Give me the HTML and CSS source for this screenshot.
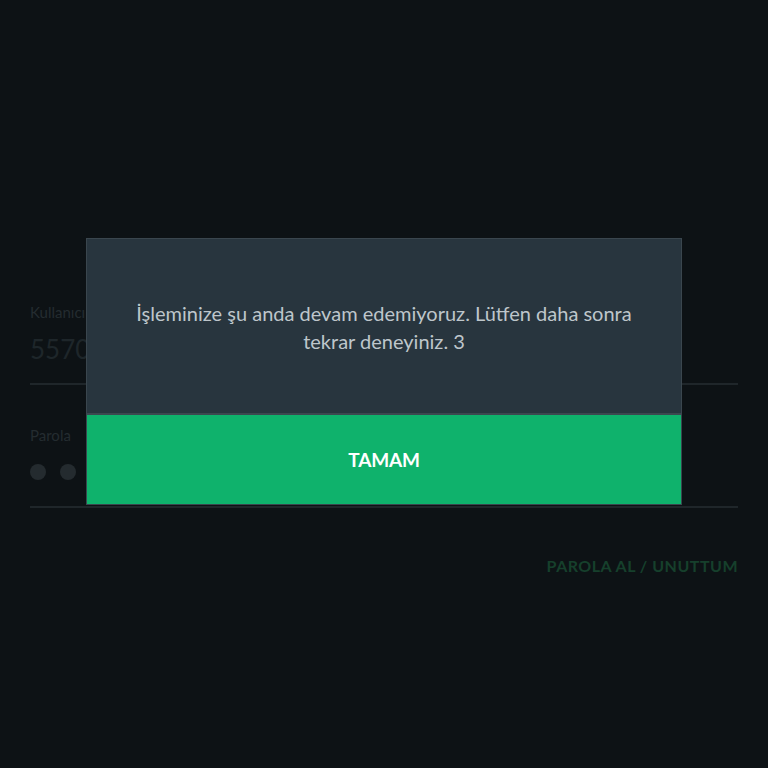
FILE: index.html
```html
<!DOCTYPE html>
<html lang="tr">
<head>
    <meta charset="UTF-8">
    <meta name="viewport" content="width=device-width, initial-scale=1.0">
    <title>Giriş</title>
    <link rel="stylesheet" href="styles.css">
</head>
<body>
<div class="login">
    <div class="field">
        <div class="field-label">Kullanıcı adı</div>
        <div class="field-value">5570123</div>
    </div>
    <div class="field field-pass">
        <div class="field-label">Parola</div>
        <div class="dots">
            <span class="dot"></span>
            <span class="dot"></span>
            <span class="dot"></span>
            <span class="dot"></span>
            <span class="dot"></span>
            <span class="dot"></span>
        </div>
    </div>
    <div class="links">
        <a href="#" class="forgot">PAROLA AL / UNUTTUM</a>
    </div>
</div>

<div class="dialog">
    <div class="dialog-body">
        İşleminize şu anda devam edemiyoruz. Lütfen daha sonra tekrar deneyiniz. 3
    </div>
    <button class="dialog-button">TAMAM</button>
</div>
</body>
</html>
```

FILE: styles.css
```css
body {
    font-family: Lato, "Noto Sans", sans-serif;
    margin: 0;
    padding: 0;
    background-color: #0d1215;
    width: 768px;
    height: 768px;
    overflow: hidden;
    position: relative;
}

.login {
    padding: 302px 30px 0 30px;
    display: flex;
    flex-direction: column;
}

.field {
    border-bottom: 2px solid #1f262a;
    padding-bottom: 17px;
}

.field-label {
    color: #242c30;
    font-size: 15px;
    line-height: 20px;
}

.field-value {
    color: #1e262a;
    font-size: 26px;
    line-height: 34px;
    margin-top: 10px;
}

.field-pass {
    margin-top: 40px;
    padding-bottom: 26px;
}

.dots {
    display: flex;
    gap: 14px;
    margin-top: 19px;
}

.dot {
    width: 16px;
    height: 16px;
    border-radius: 50%;
    background-color: #242b2f;
}

.links {
    display: flex;
    justify-content: flex-end;
    margin-top: 48px;
}

.forgot {
    color: #16402c;
    font-weight: bold;
    font-size: 16px;
    line-height: 20px;
    text-decoration: none;
    letter-spacing: 0.5px;
}

.dialog {
    position: absolute;
    left: 86px;
    top: 238px;
    width: 594px;
    border: 1px solid #3a464e;
    background-color: #28353e;
    display: flex;
    flex-direction: column;
}

.dialog-body {
    padding: 60px 44px 58px 44px;
    color: #bec6cb;
    font-size: 20px;
    line-height: 28px;
    text-align: center;
    border-bottom: 2px solid #3c4850;
}

.dialog-button {
    background-color: #0fb26c;
    color: #ffffff;
    border: none;
    height: 89px;
    font-family: Lato, "Noto Sans", sans-serif;
    font-weight: bold;
    font-size: 19px;
    letter-spacing: -0.2px;
    cursor: pointer;
}
```
